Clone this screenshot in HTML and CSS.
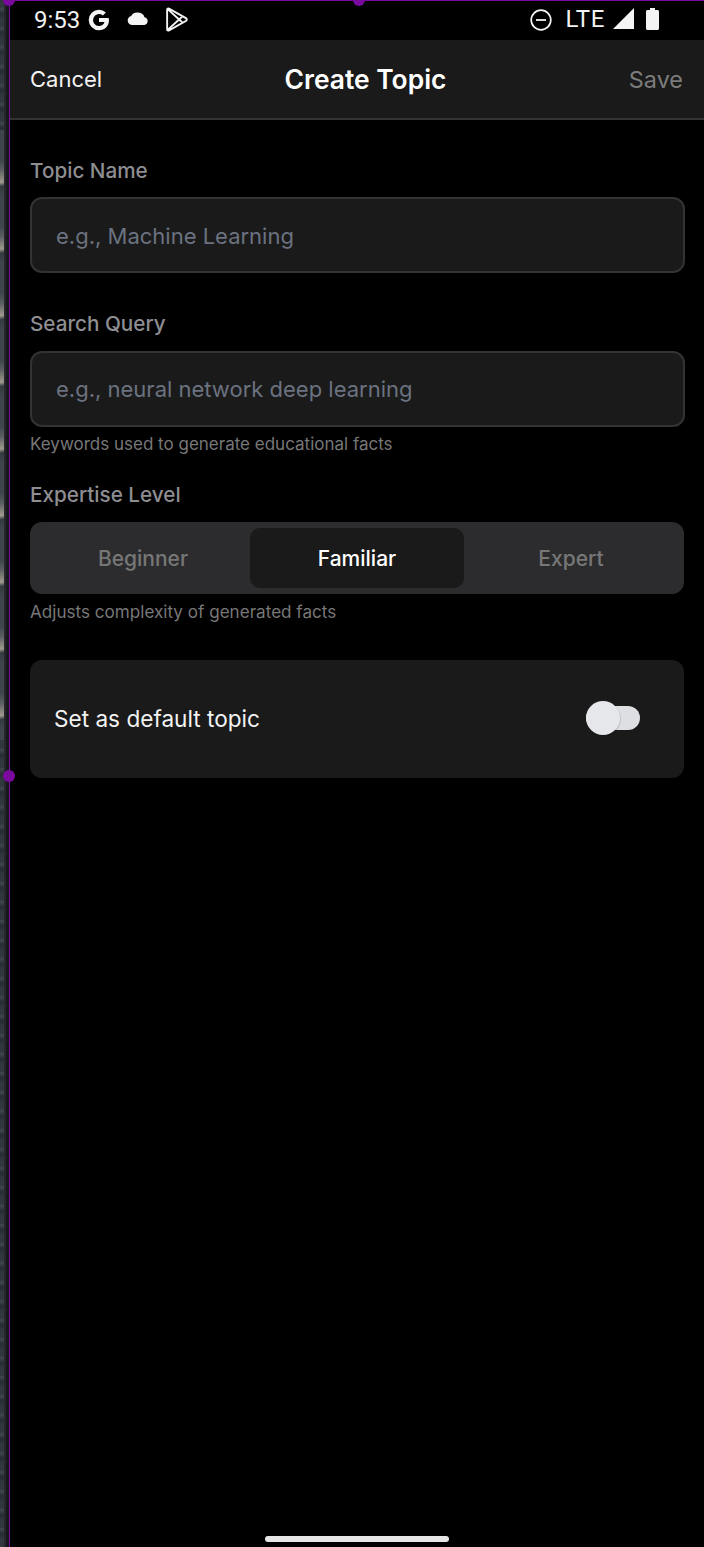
FILE: index.html
```html
<!DOCTYPE html>
<html lang="en">
<head>
<meta charset="utf-8">
<title>Create Topic</title>
<link rel="stylesheet" href="styles.css">
</head>
<body>
<div class="device">
  <div class="wallpaper"></div>
  <main class="screen">
    <div class="status">
      <div class="status-left">
        <span class="time">9:53</span>
        <svg class="ic-g" viewBox="0 0 24 24" aria-hidden="true"><path d="M21.6 10H12v4h5.5c-.7 2.6-2.9 4-5.5 4a6 6 0 1 1 3.9-10.6l3-3A10.3 10.3 0 0 0 12 1.7a10.3 10.3 0 1 0 0 20.6c5.6 0 10-3.9 10-10.3 0-.7-.2-1.400-.4-2z" fill="#f4f4f4"/></svg>
        <svg class="ic-cloud" viewBox="0 0 24 16" preserveAspectRatio="none" aria-hidden="true"><path d="M19.300 6.500A7.500 7.500 0 0 0 5.300 4.800 6 6 0 0 0 6 16h13a5 5 0 0 0 .3-9.500z" fill="#f4f4f4"/></svg>
        <svg class="ic-play" viewBox="0 0 22 24" aria-hidden="true"><path d="M2 2.500c0-1 1-1.500 1.800-1L20 10.700c1.200.7 1.200 2 0 2.700L3.800 22.500c-.8.500-1.800 0-1.800-1zM2.500 2 13.500 12 2.500 22M13.500 12l3.800-3.500M13.500 12l3.800 3.500" fill="none" stroke="#f4f4f4" stroke-width="1.800" stroke-linejoin="round"/></svg>
      </div>
      <div class="status-right">
        <svg class="ic-dnd" viewBox="0 0 22 22" aria-hidden="true"><circle cx="11" cy="11" r="9.800" fill="none" stroke="#f4f4f4" stroke-width="1.700"/><rect x="6" y="10.100" width="10" height="1.800" fill="#f4f4f4"/></svg>
        <span class="lte">LTE</span>
        <svg class="ic-signal" viewBox="0 0 21 21" aria-hidden="true"><path d="M21 0v21H0z" fill="#f4f4f4"/></svg>
        <svg class="ic-battery" viewBox="0 0 13 22" aria-hidden="true"><path d="M4 0h5v2h2.500c.8 0 1.500.7 1.500 1.500V20.500c0 .8-.7 1.500-1.500 1.500h-10C.7 22 0 21.300 0 20.500V3.500C0 2.700.7 2 1.500 2H4z" fill="#f4f4f4"/></svg>
      </div>
    </div>
    <header class="topbar">
      <span class="cancel">Cancel</span>
      <h1 class="title">Create Topic</h1>
      <span class="save">Save</span>
    </header>
    <form class="form">
      <div class="field">
        <label class="label">Topic Name</label>
        <div class="input">e.g., Machine Learning</div>
      </div>
      <div class="field field-query">
        <label class="label label-query">Search Query</label>
        <div class="input input-query">e.g., neural network deep learning</div>
        <p class="hint">Keywords used to generate educational facts</p>
      </div>
      <div class="field field-level">
        <label class="label label-level">Expertise Level</label>
        <div class="segments">
          <span class="segment">Beginner</span>
          <span class="segment segment-on">Familiar</span>
          <span class="segment">Expert</span>
        </div>
        <p class="hint hint-level">Adjusts complexity of generated facts</p>
      </div>
      <div class="card">
        <span class="card-text">Set as default topic</span>
        <span class="switch"><span class="knob"></span></span>
      </div>
    </form>
    <div class="home-wrap"><div class="home"></div></div>
  </main>
  <span class="dot dot-tl"></span>
  <span class="dot dot-tc"></span>
  <span class="dot dot-ml"></span>
</div>
</body>
</html>
```
FILE: styles.css
```css
* { box-sizing: border-box; }
html, body { margin: 0; height: 100%; background: #000; }
body { font-family: "Inter", "Liberation Sans", sans-serif; color: #fff; overflow: hidden; }

.device { position: relative; display: flex; width: 704px; height: 1547px; }
.wallpaper {
  flex: 0 0 9px;
  background:
    linear-gradient(90deg, transparent 0 4px, #24272c 4px 6px, #17171c 6px 9px),
    repeating-linear-gradient(172deg, #3e454b 0 30px, #5c6062 40px, #a09a8e 52px, #343a40 56px, #3e454b 66px) 0 130px / 100% 610px no-repeat,
    repeating-linear-gradient(180deg, #30373d 0 7px, #3f474d 9px, #262c31 14px, #30373d 19px);
}
.screen {
  flex: 1;
  display: flex;
  flex-direction: column;
  min-width: 0;
  background: #000;
  border-left: 1px solid #7a0a9e;
  border-top: 1px solid #7a0a9e;
  padding-top: 1px;
}

.status {
  flex: 0 0 38px;
  display: flex;
  justify-content: space-between;
  align-items: center;
  padding: 0 45px 3px 24px;
  font-family: "Roboto", sans-serif;
}
.status-left, .status-right { display: flex; align-items: center; }
.time { font-size: 24px; line-height: 28px; color: #f2f2f2; }
.ic-g { width: 24px; height: 24px; margin-left: 7px; }
.ic-cloud { width: 23px; height: 13px; margin-left: 15px; margin-bottom: 2px; }
.ic-play { width: 23px; height: 25px; margin-left: 16px; }
.ic-dnd { width: 22px; height: 22px; }
.lte { font-size: 24px; line-height: 28px; margin-left: 14px; margin-bottom: 2px; letter-spacing: 0.6px; color: #f2f2f2; }
.ic-signal { width: 21px; height: 21px; margin-left: 8px; margin-bottom: 2px; }
.ic-battery { width: 13px; height: 22px; margin-left: 12px; margin-bottom: 2px; }

.topbar {
  flex: 0 0 80px;
  display: flex;
  justify-content: space-between;
  align-items: center;
  padding: 0 20px;
  background: #1a1a1a;
  border-bottom: 2px solid #333;
}
.cancel { font-size: 22px; color: #f2f2f2; }
.title { margin: 0; font-size: 26.400px; font-weight: 600; line-height: 32px; color: #fff; }
.save { font-size: 23.400px; font-weight: 400; color: #7c7c7c; margin-right: 1px; }

.form { flex: 1; padding: 37px 20px 0; }
.field { display: flex; flex-direction: column; }
.field-query { margin-top: 37px; }
.field-level { margin-top: 25px; }
.label { font-size: 20.700px; line-height: 28px; font-weight: 500; color: #8e8e93; margin-bottom: 12px; }
.label-query { margin-bottom: 13px; }
.label-level { margin-bottom: 13px; }
.input {
  height: 76px;
  margin-right: -1px;
  display: flex;
  align-items: center;
  padding: 2px 24px 0;
  font-size: 22px;
  color: #6b7280;
  background: #1a1a1a;
  border: 2px solid #333;
  border-radius: 12px;
}
.input-query { padding-top: 0; }
.hint { margin: 5px 0 0; font-size: 17px; line-height: 24px; color: #777; }
.hint-level { margin-top: 6px; font-size: 17.100px; }

.segments {
  height: 72px;
  display: grid;
  grid-template-columns: repeat(3, 1fr);
  padding: 6px;
  background: #2c2c2e;
  border-radius: 12px;
}
.segment {
  display: flex;
  align-items: center;
  justify-content: center;
  font-size: 21px;
  font-weight: 500;
  color: #777;
  border-radius: 10px;
}
.segment-on { background: #1a1a1a; color: #fff; }

.card {
  height: 118px;
  margin-top: 36px;
  display: flex;
  align-items: center;
  justify-content: space-between;
  padding: 0 44px 2px 24px;
  background: #1a1a1a;
  border-radius: 12px;
}
.card-text { font-size: 22.600px; font-weight: 400; color: #f2f2f2; }
.switch { position: relative; display: block; width: 54px; height: 24px; border-radius: 12px; background: #dedfe3; }
.knob {
  position: absolute;
  left: 0;
  top: -5px;
  width: 34px;
  height: 34px;
  border-radius: 50%;
  background: #e6e7ea;
  box-shadow: 1px 1px 1px rgba(0,0,0,.12);
}

.home-wrap { flex: 0 0 auto; display: flex; justify-content: center; padding-bottom: 5px; }
.home { width: 184px; height: 6px; border-radius: 3px; background: #e6e6e6; }

.dot { position: absolute; width: 12px; height: 12px; border-radius: 50%; background: #7a0a9e; }
.dot-tl { left: 3px; top: -6px; }
.dot-tc { left: 353px; top: -6px; }
.dot-ml { left: 3px; top: 770px; }
```
